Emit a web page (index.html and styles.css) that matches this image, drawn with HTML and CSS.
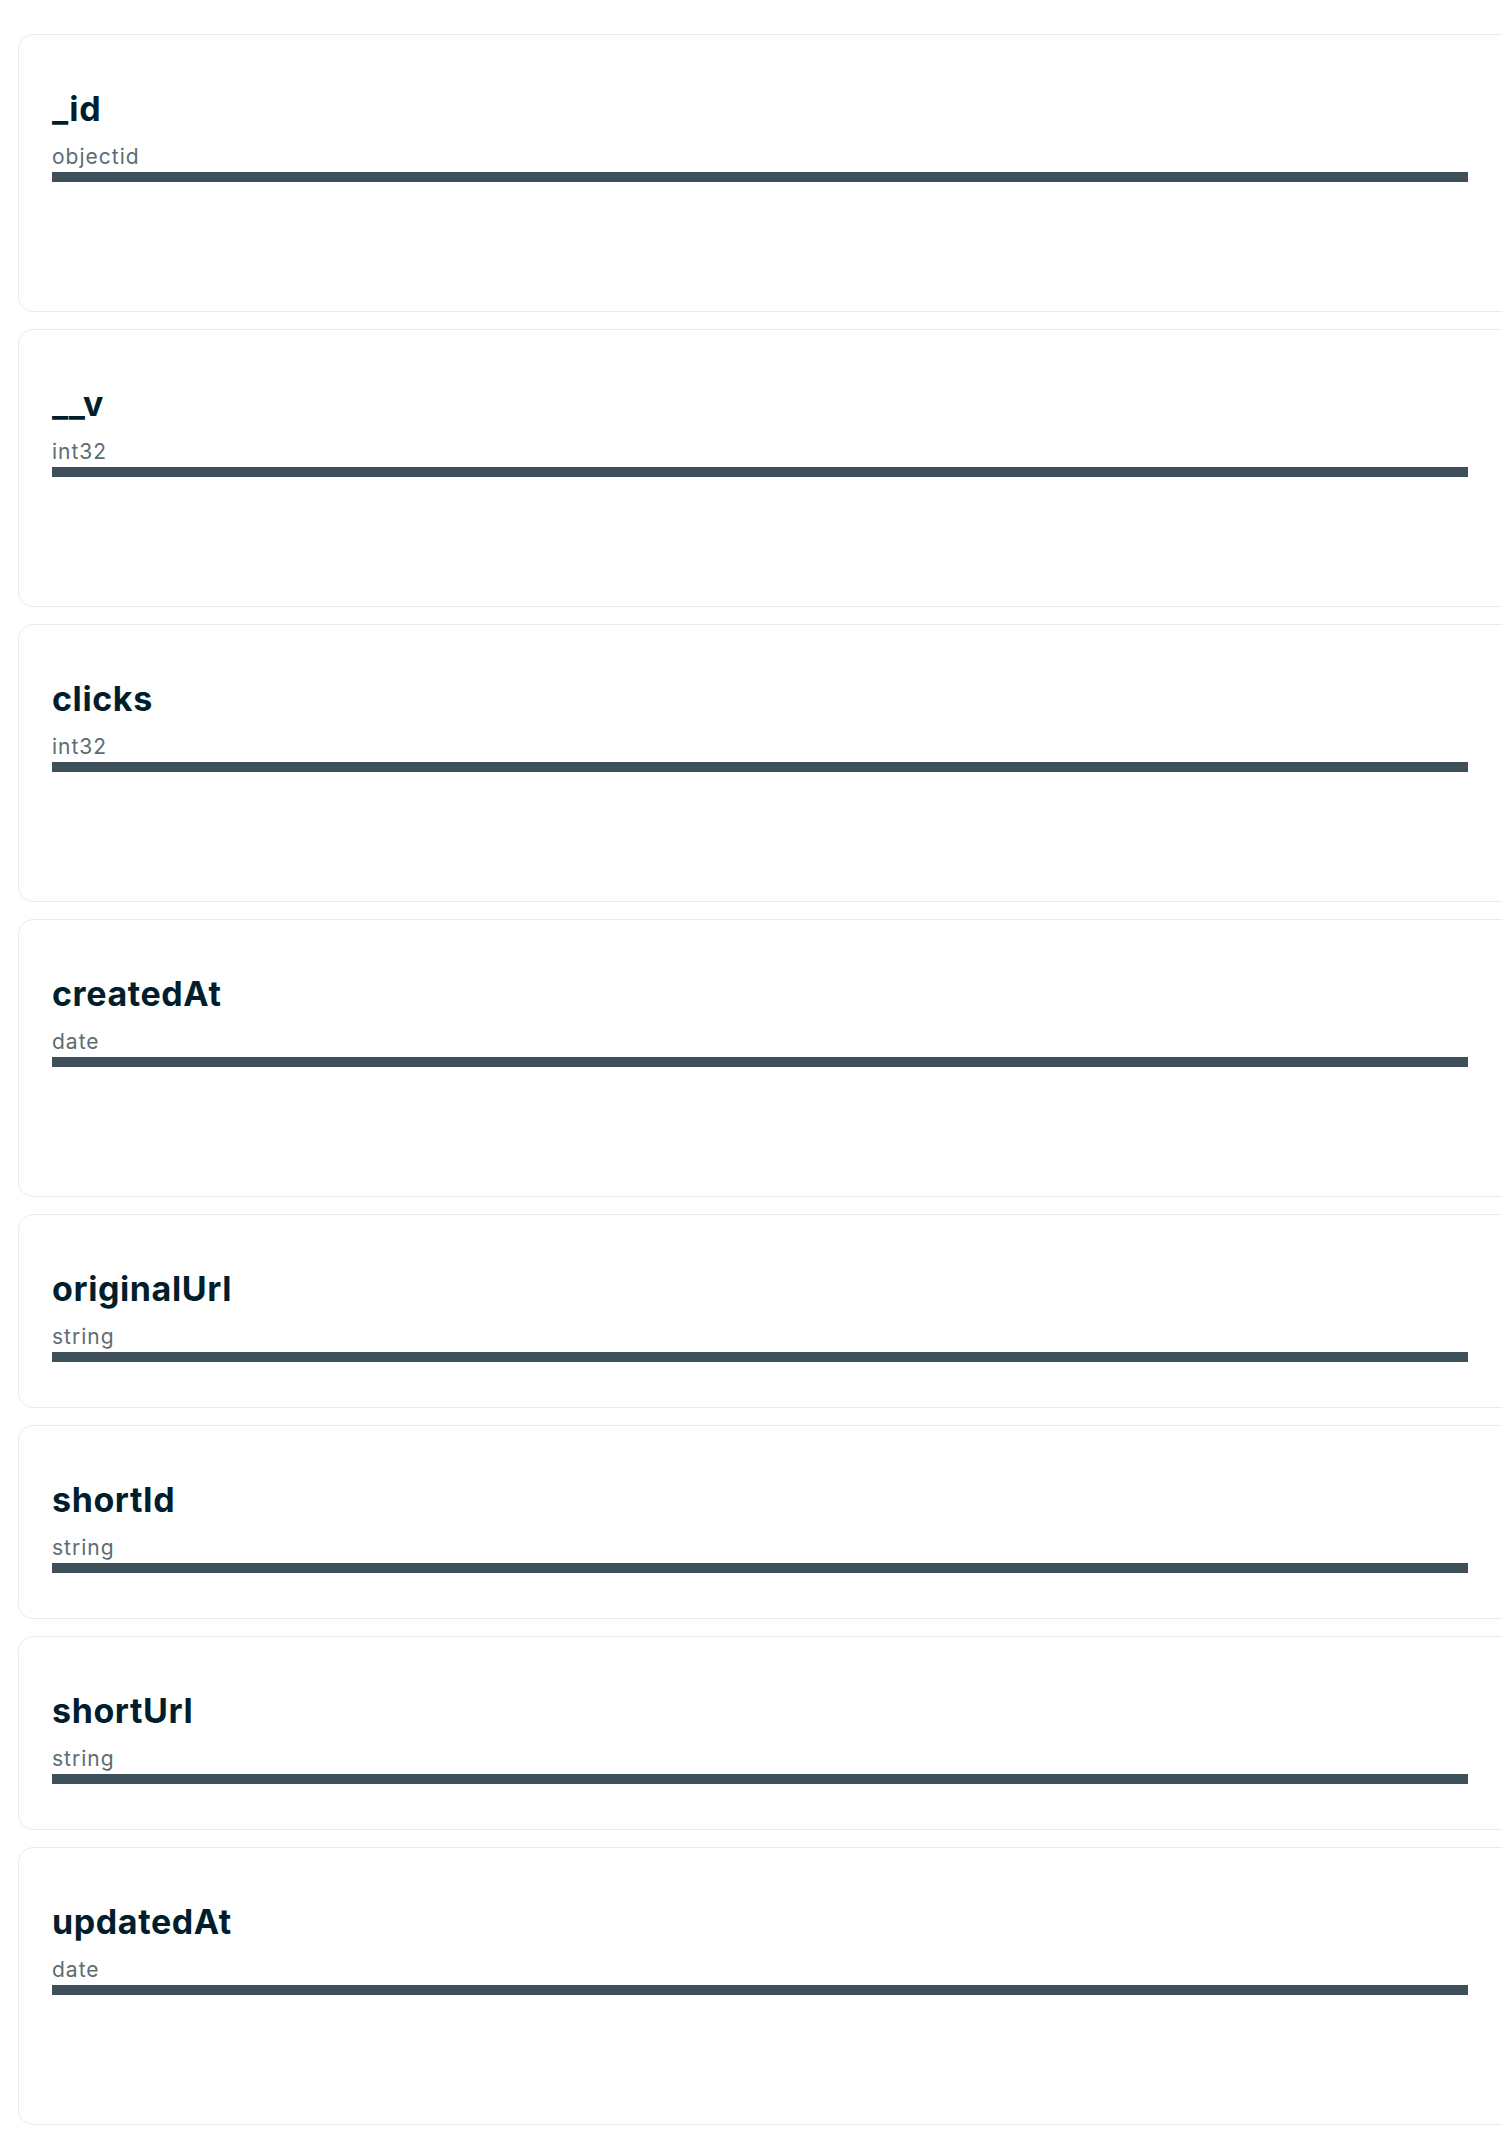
FILE: index.html
```html
<!DOCTYPE html>
<html lang="en">
<head>
<meta charset="utf-8">
<title>Schema</title>
<link rel="stylesheet" href="styles.css">
</head>
<body>
<div class="list">
  <div class="card card-tall">
    <div class="name">_id</div>
    <div class="type">objectid</div>
    <div class="bar"></div>
  </div>
  <div class="card card-tall">
    <div class="name">__v</div>
    <div class="type">int32</div>
    <div class="bar"></div>
  </div>
  <div class="card card-tall">
    <div class="name">clicks</div>
    <div class="type">int32</div>
    <div class="bar"></div>
  </div>
  <div class="card card-tall">
    <div class="name">createdAt</div>
    <div class="type">date</div>
    <div class="bar"></div>
  </div>
  <div class="card">
    <div class="name">originalUrl</div>
    <div class="type">string</div>
    <div class="bar"></div>
  </div>
  <div class="card">
    <div class="name">shortId</div>
    <div class="type">string</div>
    <div class="bar"></div>
  </div>
  <div class="card">
    <div class="name">shortUrl</div>
    <div class="type">string</div>
    <div class="bar"></div>
  </div>
  <div class="card card-tall">
    <div class="name">updatedAt</div>
    <div class="type">date</div>
    <div class="bar"></div>
  </div>
</div>
</body>
</html>
```
FILE: styles.css
```css
html, body {
  margin: 0;
  padding: 0;
  background: #ffffff;
}
body {
  font-family: Inter, "Noto Sans", sans-serif;
  overflow: hidden;
}
.list {
  display: flex;
  flex-direction: column;
  gap: 17px;
  padding: 34px 0 0 18px;
  width: 1520px;
}
.card {
  box-sizing: border-box;
  width: 1520px;
  height: 194px;
  border: 1px solid #e8edeb;
  border-radius: 15px;
  background: #fff;
  padding: 54px 69px 0 33px;
}
.card-tall {
  height: 278px;
}
.name {
  font-size: 34px;
  line-height: 40px;
  font-weight: 700;
  color: #001e2b;
  letter-spacing: 0.6px;
}
.type {
  margin-top: 16px;
  font-size: 21px;
  line-height: 24px;
  color: #5c6c75;
  letter-spacing: 1px;
}
.bar {
  margin-top: 3px;
  height: 10px;
  background: #3d4f58;
}
```
